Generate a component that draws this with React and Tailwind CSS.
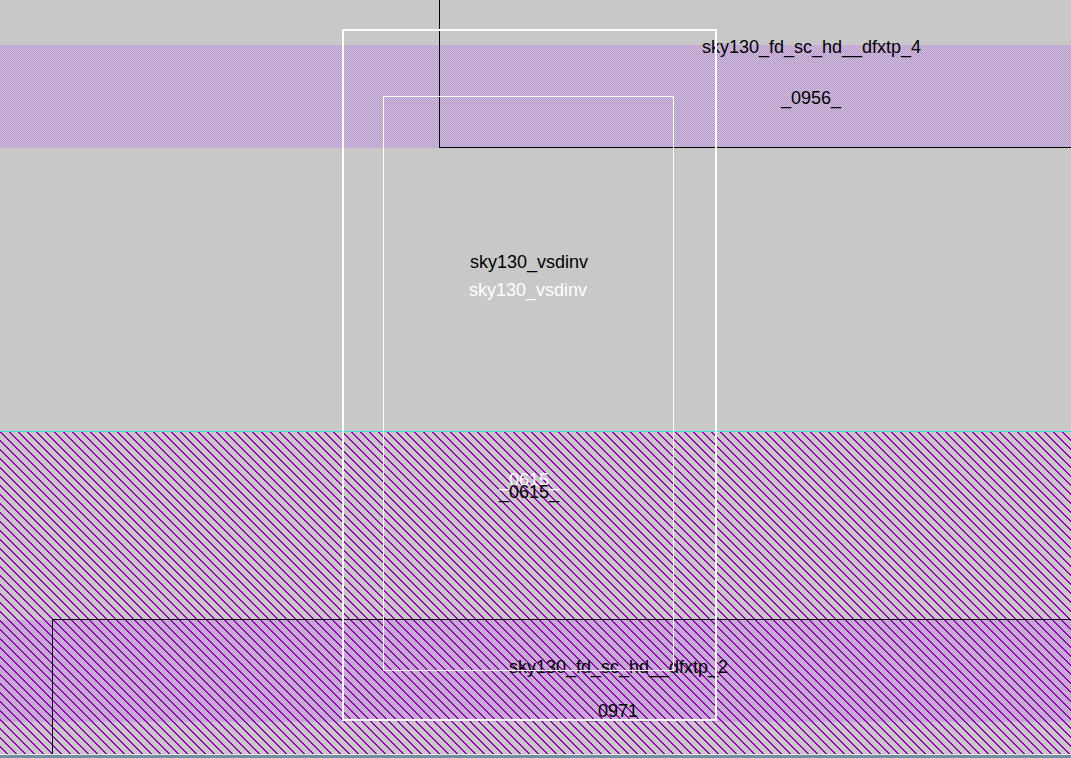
function Band({ y, h, light, hatch }) {
  return (
    <svg
      className="block w-[1071px] shrink-0"
      height={h}
      viewBox={`0 ${y} 1071 ${h}`}
      shapeRendering="crispEdges"
    >
      {light && <rect x="0" y={y} width="1071" height={h} fill="url(#light)" />}
      {hatch && <rect x="0" y={y} width="1071" height={h} fill="url(#hatch)" />}
    </svg>
  );
}

function Patterns() {
  return (
    <svg className="absolute w-0 h-0">
      <defs>
        <pattern id="light" width="2" height="2" patternUnits="userSpaceOnUse">
          <rect width="2" height="2" fill="#c8c8c8" />
          <rect x="0" y="0" width="1" height="1" fill="#c090e0" />
          <rect x="1" y="1" width="1" height="1" fill="#c090e0" />
        </pattern>
        <pattern id="hatch" width="9" height="9" patternUnits="userSpaceOnUse">
          {[0, 1, 2, 3, 4, 5, 6, 7, 8].map((i) => (
            <g key={i}>
              <rect x={i} y={i} width="1" height="1" fill="#9c00bc" />
              <rect x={(i + 1) % 9} y={i} width="1" height="1" fill="#9c00bc" />
            </g>
          ))}
        </pattern>
      </defs>
    </svg>
  );
}

export default function App() {
  return (
    <div className="flex flex-col w-[1071px] h-[758px] overflow-hidden bg-[#c8c8c8] font-['Liberation_Sans',Arial,sans-serif] text-[18px] leading-[20px] text-black">
      <Patterns />
      <div className="relative h-[754px] overflow-hidden">
        <div className="flex flex-col">
          <div className="h-[45px]" />
          <Band y={45} h={103} light />
          <div className="h-[283px]" />
          <div className="h-px bg-[#40e0e0]" />
          <Band y={432} h={188} hatch />
          <Band y={620} h={102} light hatch />
          <Band y={722} h={32} hatch />
        </div>

        <span className="absolute left-[811.5px] top-[37px] -translate-x-1/2 whitespace-nowrap">sky130_fd_sc_hd__dfxtp_4</span>
        <span className="absolute left-[811px] top-[88px] -translate-x-1/2 whitespace-nowrap">_0956_</span>
        <span className="absolute left-[529px] top-[252px] -translate-x-1/2 whitespace-nowrap">sky130_vsdinv</span>
        <span className="absolute left-[528px] top-[280px] -translate-x-1/2 whitespace-nowrap text-white">sky130_vsdinv</span>
        <span className="absolute left-[529px] top-[470px] -translate-x-1/2 whitespace-nowrap text-white">_0615_</span>
        <span className="absolute left-[529px] top-[482px] -translate-x-1/2 whitespace-nowrap">_0615_</span>
        <span className="absolute left-[618.5px] top-[657px] -translate-x-1/2 whitespace-nowrap">sky130_fd_sc_hd__dfxtp_2</span>
        <span className="absolute left-[618px] top-[701px] -translate-x-1/2 whitespace-nowrap">_0971_</span>

        <div className="absolute left-[439px] top-[-2px] w-[640px] h-[150px] border border-black" />
        <div className="absolute left-[52px] top-[619px] w-[1030px] h-[150px] border border-black" />
        <div className="absolute left-[342px] top-[29px] w-[375px] h-[692px] border-2 border-white" />
        <div className="absolute left-[383px] top-[96px] w-[291px] h-[575px] border border-white" />
      </div>
      <div className="h-px bg-[#e4e4e4]" />
      <div className="h-[3px] bg-[#6f8ea0]" />
    </div>
  );
}
